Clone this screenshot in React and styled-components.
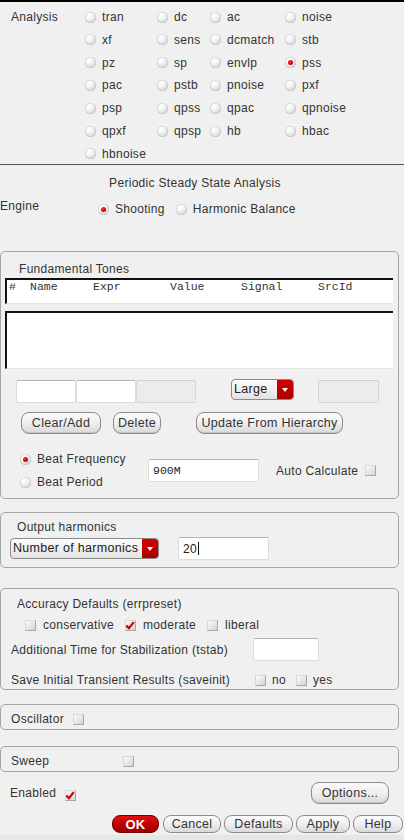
import styled, { createGlobalStyle } from 'styled-components'

const GlobalStyle = createGlobalStyle`
  html, body {
    margin: 0;
    padding: 0;
    background: #f0f0f0;
  }
  body {
    font-family: 'Liberation Sans', Arial, sans-serif;
    font-size: 12px;
    letter-spacing: 0.3px;
    color: #333;
  }
  * {
    box-sizing: border-box;
  }
`

const analyses = [
  'tran', 'dc', 'ac', 'noise',
  'xf', 'sens', 'dcmatch', 'stb',
  'pz', 'sp', 'envlp', 'pss',
  'pac', 'pstb', 'pnoise', 'pxf',
  'psp', 'qpss', 'qpac', 'qpnoise',
  'qpxf', 'qpsp', 'hb', 'hbac',
  'hbnoise',
]

const columns = [
  { label: '#', x: 2 },
  { label: 'Name', x: 23 },
  { label: 'Expr', x: 86 },
  { label: 'Value', x: 163 },
  { label: 'Signal', x: 234 },
  { label: 'SrcId', x: 311 },
]

function Radio({ checked }) {
  return <RadioDot checked={checked} />
}

function Check({ checked }) {
  return (
    <CheckBox>
      {checked && (
        <svg width="11" height="11" viewBox="0 0 11 11">
          <path d="M1.5 5.5 L4.2 8.6 L9.6 1.8" fill="none" stroke="#cc0000" strokeWidth="2.4" strokeLinejoin="round" />
        </svg>
      )}
    </CheckBox>
  )
}

function Combo({ width, children }) {
  return (
    <ComboBox style={{ width }}>
      <ComboText>{children}</ComboText>
      <ComboArrow>
        <svg width="8" height="6" viewBox="0 0 8 6">
          <path d="M1 1 L7 1 L4 5 Z" fill="#fff" />
        </svg>
      </ComboArrow>
    </ComboBox>
  )
}

export default function App() {
  return (
    <Page>
      <GlobalStyle />
      <AnalysisSection>
        <SectionLabel>Analysis</SectionLabel>
        <RadioGrid>
          {analyses.map((a) => (
            <Option key={a}>
              <Radio checked={a === 'pss'} />
              <span>{a}</span>
            </Option>
          ))}
        </RadioGrid>
      </AnalysisSection>

      <Heading>Periodic Steady State Analysis</Heading>
      <EngineRow>
        <EngineLabel>Engine</EngineLabel>
        <EngineOptions>
          <Option>
            <Radio checked />
            <span>Shooting</span>
          </Option>
          <Option>
            <Radio />
            <span>Harmonic Balance</span>
          </Option>
        </EngineOptions>
      </EngineRow>

      <Group top={34} pad="10px 0 8px 0">
        <GroupTitle left={18}>Fundamental Tones</GroupTitle>
        <TableHeader>
          {columns.map((c) => (
            <HeaderCell key={c.label} style={{ left: c.x }}>{c.label}</HeaderCell>
          ))}
        </TableHeader>
        <TableBody />
        <FieldRow>
          <Field width={60} />
          <Field width={60} />
          <Field width={60} disabled />
          <ComboSlot left={35}>
            <Combo width={63}>Large</Combo>
          </ComboSlot>
          <Field width={61} disabled style={{ marginLeft: 24 }} />
        </FieldRow>
        <ButtonRow>
          <Button width={80}>Clear/Add</Button>
          <Button width={48} left={12}>Delete</Button>
          <Button width={147} left={35}>Update From Hierarchy</Button>
        </ButtonRow>
        <BeatArea>
          <BeatOptions>
            <Option>
              <Radio checked />
              <span>Beat Frequency</span>
            </Option>
            <Option>
              <Radio />
              <span>Beat Period</span>
            </Option>
          </BeatOptions>
          <BeatRight>
            <Field width={111} mono>900M</Field>
            <AutoLabel>Auto Calculate</AutoLabel>
            <Check />
          </BeatRight>
        </BeatArea>
      </Group>

      <Group top={13} pad="7px 0 7px 0">
        <GroupTitle left={16}>Output harmonics</GroupTitle>
        <HarmRow>
          <Combo width={149}>Number of harmonics</Combo>
          <Field width={91} style={{ marginLeft: 19 }}>
            20<Caret />
          </Field>
        </HarmRow>
      </Group>

      <Group top={20} pad="8px 0 1px 0">
        <GroupTitle left={16}>Accuracy Defaults (errpreset)</GroupTitle>
        <CheckRow>
          <CheckOption>
            <Check />
            <span>conservative</span>
          </CheckOption>
          <CheckOption>
            <Check checked />
            <span>moderate</span>
          </CheckOption>
          <CheckOption>
            <Check />
            <span>liberal</span>
          </CheckOption>
        </CheckRow>
        <FormRow top={5} height={23}>
          <FormLabel width={242}>Additional Time for Stabilization (tstab)</FormLabel>
          <Field width={66} />
        </FormRow>
        <FormRow top={11} height={16}>
          <FormLabel width={244}>Save Initial Transient Results (saveinit)</FormLabel>
          <CheckOption gap={6} spacing={10}>
            <Check />
            <span>no</span>
          </CheckOption>
          <CheckOption gap={6}>
            <Check />
            <span>yes</span>
          </CheckOption>
        </FormRow>
      </Group>

      <Group top={14} pad="7px 0 3px 10px">
        <InlineRow>
          <span>Oscillator</span>
          <Check />
        </InlineRow>
      </Group>

      <Group top={16} pad="7px 0 3px 10px">
        <InlineRow>
          <span style={{ width: 103 }}>Sweep</span>
          <Check />
        </InlineRow>
      </Group>

      <EnabledRow>
        <InlineRow>
          <span>Enabled</span>
          <CheckDown>
            <Check checked />
          </CheckDown>
        </InlineRow>
        <Button width={78}>Options...</Button>
      </EnabledRow>

      <DialogButtons>
        <OkButton>OK</OkButton>
        <SmallButton width={58}>Cancel</SmallButton>
        <SmallButton width={69}>Defaults</SmallButton>
        <SmallButton width={54}>Apply</SmallButton>
        <SmallButton width={50}>Help</SmallButton>
      </DialogButtons>
      <BottomStrip />
    </Page>
  )
}

const Page = styled.div`
  width: 404px;
  height: 840px;
  overflow: hidden;
  border-top: 2px solid #000;
  display: flex;
  flex-direction: column;
`

const AnalysisSection = styled.div`
  display: flex;
  height: 163px;
  padding-top: 7px;
  border-bottom: 1px solid #555;
`

const SectionLabel = styled.div`
  width: 85px;
  padding-left: 11px;
  line-height: 16px;
`

const RadioGrid = styled.div`
  display: grid;
  grid-template-columns: 72px 53px 75px auto;
  grid-auto-rows: 16px;
  row-gap: 6.83px;
`

const Option = styled.label`
  display: flex;
  align-items: center;
  gap: 6px;
  height: 16px;
  white-space: nowrap;
`

const RadioDot = styled.span`
  position: relative;
  flex: none;
  width: 11px;
  height: 11px;
  border-radius: 50%;
  background: radial-gradient(circle at 35% 30%, #ffffff 0%, #f4f4f4 35%, #cfcfcf 80%, #b8b8b8 100%);
  box-shadow: inset 0 0 0 0.5px #c4c4c4;
  &::after {
    content: '';
    display: ${({ checked }) => (checked ? 'block' : 'none')};
    position: absolute;
    left: 3px;
    top: 3px;
    width: 5px;
    height: 5px;
    border-radius: 50%;
    background: radial-gradient(circle at 40% 35%, #ff2a2a, #c00000 70%);
  }
`

const CheckBox = styled.span`
  display: inline-flex;
  flex: none;
  width: 11px;
  height: 11px;
  background: linear-gradient(135deg, #fbfbfb 0%, #e4e4e4 60%, #d2d2d2 100%);
  border: 1px solid #d8d8d8;
  border-right-color: #a8a8a8;
  border-bottom-color: #a8a8a8;
  svg {
    margin: -1px 0 0 -1px;
  }
`

const Heading = styled.div`
  margin-top: 11px;
  padding-right: 14px;
  text-align: center;
  line-height: 14px;
`

const EngineRow = styled.div`
  display: flex;
  align-items: flex-start;
  margin-top: 9px;
`

const EngineLabel = styled.div`
  width: 98px;
  line-height: 14px;
`

const EngineOptions = styled.div`
  display: flex;
  gap: 11px;
  margin-top: 2px;
`

const Group = styled.div`
  margin-top: ${({ top }) => top}px;
  width: 399px;
  border: 1px solid #a6a6a6;
  border-radius: 5px;
  padding: ${({ pad }) => pad};
  display: flex;
  flex-direction: column;
`

const GroupTitle = styled.div`
  padding-left: ${({ left }) => left}px;
  line-height: 14px;
`

const TableHeader = styled.div`
  position: relative;
  margin: 2px 0 0 4px;
  width: 388px;
  height: 26px;
  background: #fff;
  border-top: 2px solid #111;
  border-left: 2px solid #111;
  border-bottom: 1px solid #e2e2e2;
`

const HeaderCell = styled.span`
  position: absolute;
  top: 0;
  font-family: 'Liberation Mono', 'Courier New', monospace;
  font-size: 11.5px;
  letter-spacing: 0;
  line-height: 14px;
  color: #333;
`

const TableBody = styled.div`
  margin: 7px 0 0 4px;
  width: 388px;
  height: 58px;
  background: #fff;
  border-top: 2px solid #111;
  border-left: 2px solid #111;
  border-bottom: 1px solid #e2e2e2;
`

const FieldRow = styled.div`
  display: flex;
  align-items: flex-start;
  margin-top: 11px;
  padding-left: 15px;
`

const Field = styled.div`
  flex: none;
  width: ${({ width }) => width}px;
  height: 23px;
  display: flex;
  align-items: center;
  padding-left: 4px;
  background: ${({ disabled }) => (disabled ? '#ececec' : '#fff')};
  border: 1px solid ${({ disabled }) => (disabled ? '#d6d6d6' : '#dcdcdc')};
  border-top-color: ${({ disabled }) => (disabled ? '#d0d0d0' : '#b4b4b4')};
  border-radius: 2px;
  font-family: ${({ mono }) => (mono ? "'Liberation Mono', 'Courier New', monospace" : "'Liberation Sans', Arial, sans-serif")};
  font-size: ${({ mono }) => (mono ? '11.5px' : '12px')};
  letter-spacing: ${({ mono }) => (mono ? '0' : '0.3px')};
  color: #222;
`

const Caret = styled.span`
  display: inline-block;
  width: 1px;
  height: 13px;
  margin-left: 1px;
  background: #111;
`

const ComboSlot = styled.div`
  margin-left: ${({ left }) => left}px;
  margin-top: -1px;
`

const ComboBox = styled.div`
  display: flex;
  height: 21px;
  border: 1px solid #8a8a8a;
  border-radius: 4px;
  overflow: hidden;
  background: linear-gradient(#fdfdfd, #e2e2e2);
`

const ComboText = styled.div`
  flex: 1;
  padding-left: 2px;
  line-height: 19px;
  font-size: 12.5px;
  color: #222;
  white-space: nowrap;
`

const ComboArrow = styled.div`
  width: 16px;
  display: flex;
  align-items: center;
  justify-content: center;
  background: linear-gradient(#d40000, #a80000);
`

const ButtonRow = styled.div`
  display: flex;
  margin-top: 9px;
  padding-left: 20px;
`

const Button = styled.button`
  flex: none;
  width: ${({ width }) => width}px;
  height: 22px;
  margin-left: ${({ left }) => left || 0}px;
  padding: 0;
  border: 1px solid #8c8c8c;
  border-radius: 8px;
  background: linear-gradient(#fbfbfb 0%, #efefef 50%, #d9d9d9 100%);
  box-shadow: inset 0 -1px 0 #c4c4c4;
  font-family: 'Liberation Sans', Arial, sans-serif;
  font-size: 12.5px;
  letter-spacing: 0.3px;
  color: #333;
  white-space: nowrap;
`

const BeatArea = styled.div`
  display: flex;
  margin-top: 17px;
  padding-left: 19px;
`

const BeatOptions = styled.div`
  width: 128px;
  display: flex;
  flex-direction: column;
  gap: 7px;
`

const BeatRight = styled.div`
  display: flex;
  align-items: center;
  margin-top: 8px;
  height: 23px;
`

const AutoLabel = styled.span`
  margin: 0 7px 0 17px;
  white-space: nowrap;
`

const HarmRow = styled.div`
  display: flex;
  align-items: center;
  margin-top: 3px;
  padding-left: 9px;
`

const CheckRow = styled.div`
  display: flex;
  margin-top: 6px;
  padding-left: 24px;
  gap: 11px;
`

const CheckOption = styled.label`
  display: flex;
  align-items: center;
  height: 16px;
  gap: ${({ gap }) => gap || 7}px;
  margin-right: ${({ spacing }) => spacing || 0}px;
  white-space: nowrap;
`

const FormRow = styled.div`
  display: flex;
  align-items: center;
  margin-top: ${({ top }) => top}px;
  height: ${({ height }) => height}px;
  padding-left: 10px;
`

const FormLabel = styled.span`
  width: ${({ width }) => width}px;
  white-space: nowrap;
`

const InlineRow = styled.div`
  display: flex;
  align-items: center;
  gap: 9px;
  height: 14px;
`

const CheckDown = styled.span`
  display: inline-flex;
  margin-top: 5px;
`

const EnabledRow = styled.div`
  display: flex;
  align-items: center;
  justify-content: space-between;
  margin-top: 10px;
  padding: 0 15px 0 10px;
  height: 22px;
`

const DialogButtons = styled.div`
  display: flex;
  justify-content: flex-end;
  gap: 3px;
  margin-top: 11px;
  padding-right: 1px;
`

const SmallButton = styled.button`
  flex: none;
  width: ${({ width }) => width}px;
  height: 18px;
  padding: 0;
  border: 1px solid #8c8c8c;
  border-radius: 8px;
  background: linear-gradient(#fbfbfb 0%, #efefef 50%, #d9d9d9 100%);
  font-family: 'Liberation Sans', Arial, sans-serif;
  font-size: 12.5px;
  letter-spacing: 0.3px;
  color: #333;
`

const OkButton = styled(SmallButton)`
  width: 47px;
  margin-right: 1px;
  border-color: #7a0000;
  background: linear-gradient(#e01010 0%, #c00000 55%, #9c0000 100%);
  color: #fff;
  font-weight: bold;
  font-size: 13px;
`

const BottomStrip = styled.div`
  margin-top: 2px;
  flex: 1;
  background: #e6e6e6;
`
